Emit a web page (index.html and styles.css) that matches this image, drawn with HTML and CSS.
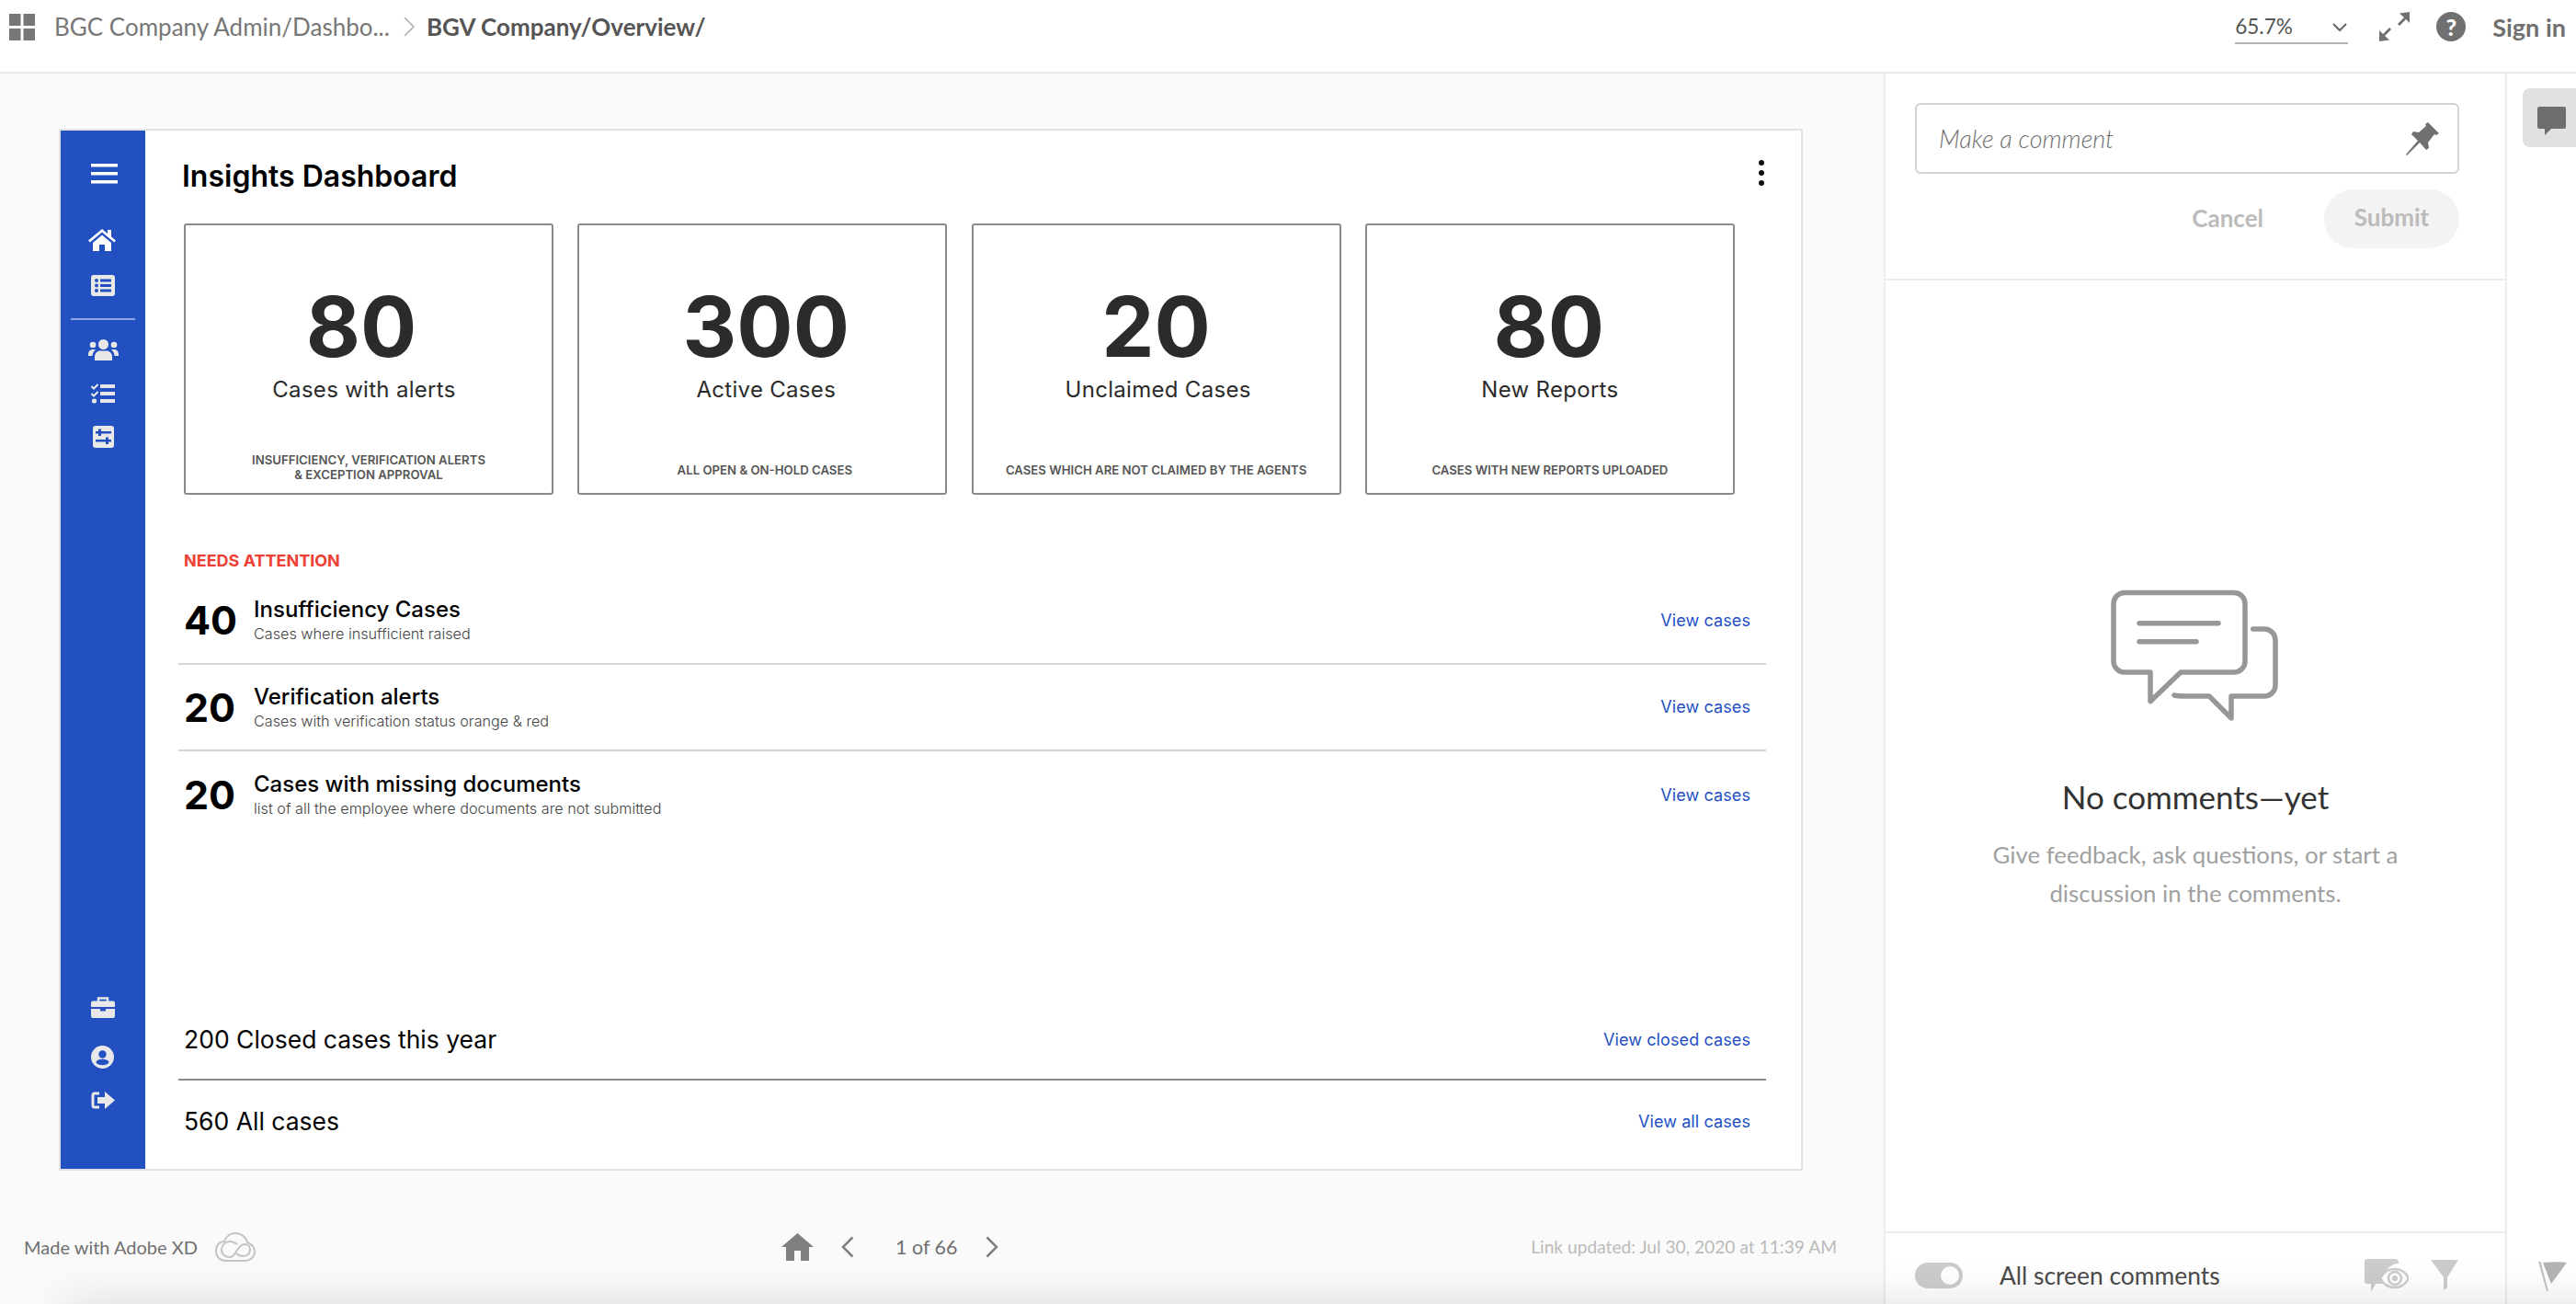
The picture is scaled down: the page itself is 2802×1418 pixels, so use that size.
FILE: index.html
```html
<!DOCTYPE html>
<html>
<head lang="en">
    <meta charset="utf-8">
    <title>BGV Company/Overview/</title>
    <link rel="stylesheet" href="styles.css">
</head>
<body>

<header class="topbar">
    <svg class="grid-icon" viewBox="0 0 28 29"><path d="M0 0h12.500v13H0zM15.500 0H28v13H15.500zM0 16h12.500v13H0zM15.500 16H28v13H15.500z"/></svg>
    <span class="crumb">BGC Company Admin/Dashbo...</span>
    <svg class="crumb-sep" viewBox="0 0 12 22"><path d="M1 1l10 10L1 21"/></svg>
    <span class="crumb crumb-now">BGV Company/Overview/</span>

    <div class="zoom-select">
        <span>65.7%</span>
        <svg viewBox="0 0 16 10"><path d="M1 1l7 7 7-7"/></svg>
    </div>
    <svg class="expand-icon" viewBox="0 0 33 32"><path d="M33 0v12l-4-4-7 7-2-2 7-7-5-4.500zM0 32V20l4 4 7-7 2 2-7 7 5 4.500z"/></svg>
    <div class="help-icon">?</div>
    <a class="sign-in" href="#">Sign in</a>
</header>

<main class="main">
    <section class="stage">
        <div class="frame">
            <nav class="sidebar">
                <svg class="nav-icon nav-menu" viewBox="0 0 29 22"><path d="M0 0h29v3.500H0zM0 9h29v3.500H0zM0 18h29v3.500H0z"/></svg>
                <svg class="nav-icon nav-home" viewBox="0 0 30 24"><path d="M15 0L0 12.500l1.800 2L15 3.600l13.200 10.900 1.800-2-5-4.200V1h-4v4z"/><path d="M5 15L15 6.500 25 15v9h-7v-7h-6v7H5z"/></svg>
                <svg class="nav-icon nav-list" viewBox="0 0 26 23"><rect width="26" height="23" rx="3" fill="#e8e8e8"/><g fill="#2250c1"><circle cx="6" cy="6" r="2"/><circle cx="6" cy="11.500" r="2"/><circle cx="6" cy="17" r="2"/><path d="M10 4.500h12v3H10zM10 10h12v3H10zM10 15.500h12v3H10z"/></g></svg>
                <div class="nav-line"></div>
                <svg class="nav-icon nav-team" viewBox="0 0 33 23"><g fill="#e8e8e8"><circle cx="16.500" cy="5.500" r="5.500"/><circle cx="5" cy="6" r="3.300"/><circle cx="28" cy="6" r="3.300"/><path d="M7 23v-4c0-4 3-6.500 6-6.500h7c3 0 6 2.500 6 6.500v4z"/><path d="M0 17c0-4 2-6 5-6h3c-2 2-3.500 4-3.500 7H0zM33 17c0-4-2-6-5-6h-3c2 2 3.500 4 3.500 7H33z"/></g></svg>
                <svg class="nav-icon nav-check" viewBox="0 0 26 22"><g fill="#e8e8e8"><path d="M10 1h16v4H10zM10 9h16v4H10zM10 17h16v4H10z"/><circle cx="3.500" cy="19" r="2.600"/></g><path d="M0.500 3l2.500 2.500L7.500 1M0.500 11l2.500 2.500L7.500 9" fill="none" stroke="#e8e8e8" stroke-width="2"/></svg>
                <svg class="nav-icon nav-sliders" viewBox="0 0 23 24"><rect width="23" height="24" rx="3" fill="#e8e8e8"/><g fill="#2250c1"><path d="M3 6h17v2.500H3zM3 15h17v2.500H3z"/><path d="M6 3.500h3v7.500H6zM14 12.500h3V20h-3z"/></g></svg>

                <div class="nav-bottom">
                    <svg class="nav-icon nav-case" viewBox="0 0 26 23"><path d="M8 5V1.500h10V5" fill="none" stroke="#e8e8e8" stroke-width="2.500"/><path d="M2 4.500h22a2 2 0 0 1 2 2V11H0V6.500a2 2 0 0 1 2-2zM0 13h10v2.500h6V13h10v8a2 2 0 0 1-2 2H2a2 2 0 0 1-2-2z" fill="#e8e8e8"/></svg>
                    <svg class="nav-icon nav-user" viewBox="0 0 25 25"><circle cx="12.500" cy="12.500" r="12.500" fill="#e8e8e8"/><circle cx="12.500" cy="9.500" r="4.200" fill="#2250c1"/><ellipse cx="12.500" cy="18" rx="7" ry="3.300" fill="#2250c1"/></svg>
                    <svg class="nav-icon nav-exit" viewBox="0 0 26 19"><path d="M9 2H4a2 2 0 0 0-2 2v11a2 2 0 0 0 2 2h5" fill="none" stroke="#e8e8e8" stroke-width="3"/><path d="M7 6h8V0l11 9.500L15 19v-6H7z" fill="#e8e8e8"/></svg>
                </div>
            </nav>

            <div class="content">
                <div class="content-head">
                    <h1>Insights Dashboard</h1>
                    <div class="kebab"><i></i><i></i><i></i></div>
                </div>

                <div class="cards">
                    <div class="card">
                        <div class="card-num">80</div>
                        <div class="card-label">Cases with alerts</div>
                        <div class="card-note">Insufficiency, verification alerts<br>&amp; exception approval</div>
                    </div>
                    <div class="card">
                        <div class="card-num">300</div>
                        <div class="card-label">Active Cases</div>
                        <div class="card-note one-line">All open &amp; on-hold cases</div>
                    </div>
                    <div class="card">
                        <div class="card-num">20</div>
                        <div class="card-label">Unclaimed Cases</div>
                        <div class="card-note one-line">Cases which are not claimed by the agents</div>
                    </div>
                    <div class="card">
                        <div class="card-num">80</div>
                        <div class="card-label">New Reports</div>
                        <div class="card-note one-line">Cases with new reports uploaded</div>
                    </div>
                </div>

                <div class="attention">Needs attention</div>
                <ul class="alerts">
                    <li>
                        <span class="alert-num">40</span>
                        <div class="alert-text">
                            <strong>Insufficiency Cases</strong>
                            <span>Cases where insufficient raised</span>
                        </div>
                        <a href="#">View cases</a>
                    </li>
                    <li>
                        <span class="alert-num">20</span>
                        <div class="alert-text">
                            <strong>Verification alerts</strong>
                            <span>Cases with verification status orange &amp; red</span>
                        </div>
                        <a href="#">View cases</a>
                    </li>
                    <li>
                        <span class="alert-num">20</span>
                        <div class="alert-text">
                            <strong>Cases with missing documents</strong>
                            <span>list of all the employee where documents are not submitted</span>
                        </div>
                        <a href="#">View cases</a>
                    </li>
                </ul>

                <div class="totals">
                    <div class="total-row">
                        <span>200 Closed cases this year</span>
                        <a href="#">View closed cases</a>
                    </div>
                    <div class="total-row">
                        <span>560 All cases</span>
                        <a href="#">View all cases</a>
                    </div>
                </div>
            </div>
        </div>

        <footer class="stage-foot">
            <div class="foot-left">
                <span>Made with Adobe XD</span>
                <svg class="cc-icon" viewBox="0 0 44 32"><path d="M11 31C5 31 1 26 1 20 1 14 5 10 10 10 12 4 17 1 22 1c7 0 12 5 13 10 5 2 8 6 8 10 0 6-5 10-10 10z"/><path d="M24 13c-3-2-5-3-8-3-5 0-9 4-9 9s4 8 9 8c7 0 8-14 16-14 4 0 6 3 6 6s-2 7-7 7c-3 0-6-1-8-3"/></svg>
            </div>
            <div class="foot-pager">
                <svg class="pager-home" viewBox="0 0 35 30"><path d="M17.500 0L0 15h5v15h9V19h7v11h9V15h5z"/></svg>
                <svg class="pager-arrow" viewBox="0 0 14 24"><path d="M12.500 1.500L2 12l10.500 10.500"/></svg>
                <span class="pager-text">1 of 66</span>
                <svg class="pager-arrow" viewBox="0 0 14 24"><path d="M1.500 1.500L12 12 1.500 22.500"/></svg>
            </div>
            <div class="foot-right">Link updated: Jul 30, 2020 at 11:39 AM</div>
        </footer>
    </section>

    <aside class="panel">
        <div class="comment-form">
            <div class="comment-input">
                <span>Make a comment</span>
                <svg class="pin-icon" viewBox="0 0 36 36"><path d="M24 0l12 12-3 2-2-1-7 9 1 6-3 2-7-8-14 14-1-1 13-15-7-7 2-3 6 1 8-7-1-2z"/></svg>
            </div>
            <div class="comment-actions">
                <span class="btn-cancel">Cancel</span>
                <span class="btn-submit">Submit</span>
            </div>
        </div>

        <div class="empty">
            <svg class="empty-icon" viewBox="86 15 200 155"><path d="M128 57.700h86M128 77.700h62"/><path d="M111 24.500h120a12 12 0 0 1 12 12V99a12 12 0 0 1-12 12h-58l-33 31.700V111h-28a12 12 0 0 1-12-12V36.500a12 12 0 0 1 12-12z"/><path d="M251.700 64H264a12 12 0 0 1 12 12v49a12 12 0 0 1-12 12h-36v24l-24-24h-26c-4 0-8 0-12-1"/></svg>
            <h2>No comments—yet</h2>
            <p>Give feedback, ask questions, or start a<br>discussion in the comments.</p>
        </div>

        <div class="panel-foot">
            <div class="toggle"></div>
            <span class="toggle-label">All screen comments</span>
            <svg class="eye-icon" viewBox="0 0 48 36"><path d="M3 0h30c3 0 4 2 4 5-8 0-15 7-16 15l-1 7h-8l-5 9v-9H3c-2 0-3-1-3-3V3c0-2 1-3 3-3z" fill="#ccc"/><path d="M17 21c3-6 9-10 16-10s12 4 15 10c-3 6-8 10-15 10s-13-4-16-10z" fill="#fff" stroke="#ccc" stroke-width="2.500"/><circle cx="33" cy="21" r="7" fill="none" stroke="#ccc" stroke-width="2.500"/><circle cx="33" cy="21" r="3" fill="#ccc"/></svg>
            <svg class="funnel-icon" viewBox="0 0 30 33"><path d="M0 0h30L18 19v11l-4 3V19z"/></svg>
        </div>
    </aside>

    <div class="rail">
        <div class="rail-tab">
            <svg viewBox="0 0 31 31"><path d="M2 0h27a2 2 0 0 1 2 2v20a2 2 0 0 1-2 2H15l-7 7v-7H2a2 2 0 0 1-2-2V2a2 2 0 0 1 2-2z"/></svg>
        </div>
        <svg class="flag-icon" viewBox="0 0 31 32"><path d="M0 0l2.500-.5L11 32l-2 0z" fill="#c4c4c4"/><path d="M3 0h28L15 2 19 1z" fill="#c4c4c4"/><path d="M5 1h26L14 24z" fill="#b4b4b4"/></svg>
    </div>
</main>

</body>
</html>
```

FILE: styles.css
```css
* { box-sizing: border-box; }

html, body {
    height: 100%;
    margin: 0;
}

body {
    display: flex;
    flex-direction: column;
    overflow: hidden;
    background: #fff;
    font-family: Lato, sans-serif;
    color: #4b4b4b;
}

/* soft shadow along the bottom of the window */
body:after {
    content: "";
    position: fixed;
    left: 70px;
    right: -60px;
    bottom: -40px;
    height: 40px;
    box-shadow: 0 0 50px rgba(0, 0, 0, 0.14);
    pointer-events: none;
}

a { text-decoration: none; }

/* top bar */

.topbar {
    flex: 0 0 80px;
    display: flex;
    align-items: center;
    padding: 0 11px 20px 10px;
    border-bottom: 2px solid #e9e9e9;
}

.grid-icon { width: 28px; height: 29px; fill: #777; margin-right: 21px; }

.crumb { font-size: 26px; color: #777; width: 380px; white-space: nowrap; }

.crumb-sep {
    width: 12px;
    height: 22px;
    margin-right: 13px;
    fill: none;
    stroke: #aaa;
    stroke-width: 1.500;
}

.crumb-now { font-weight: 700; color: #555; width: auto; }

.zoom-select {
    margin-left: auto;
    width: 123px;
    height: 38px;
    display: flex;
    justify-content: space-between;
    align-items: center;
    padding-right: 1px;
    border-bottom: 2px solid #b5b5b5;
    font-size: 22.500px;
    color: #555;
}

.zoom-select svg { width: 16px; height: 10px; margin-top: 4px; fill: none; stroke: #666; stroke-width: 2; }

.expand-icon { width: 33px; height: 32px; margin-left: 34px; fill: #707070; }

.help-icon {
    width: 32px;
    height: 32px;
    margin-left: 29px;
    border-radius: 50%;
    background: #707070;
    color: #fff;
    font-size: 25px;
    font-weight: 900;
    line-height: 32px;
    text-align: center;
}

.sign-in { margin-left: 29px; font-size: 27px; font-weight: 700; color: #707070; }

.main {
    flex: 1;
    display: flex;
    min-height: 0;
}

/* artboard */

.stage {
    flex: 0 0 2049px;
    display: flex;
    flex-direction: column;
    background: #fafafa;
}

.frame {
    width: 1897px;
    height: 1133px;
    margin: 60px 0 0 64px;
    display: flex;
    border: 2px solid #e2e2e2;
    background: #fff;
}

.sidebar {
    flex: 0 0 92px;
    display: flex;
    flex-direction: column;
    align-items: center;
    padding: 36px 0 65px;
    background: #2250c1;
}

.nav-icon { display: block; fill: #fff; }
.nav-menu { width: 29px; height: 22px; margin-left: 3px; }
.nav-home { width: 30px; height: 24px; margin: 49px 2px 0 0; }
.nav-list { width: 26px; height: 23px; margin-top: 26px; }
.nav-line { width: 70px; height: 2px; margin-top: 24px; background: #8ea7e0; }
.nav-team { width: 33px; height: 23px; margin-top: 21px; }
.nav-check { width: 26px; height: 22px; margin-top: 25px; }
.nav-sliders { width: 23px; height: 24px; margin-top: 24px; }
.nav-bottom { margin-top: auto; }
.nav-case { width: 26px; height: 23px; }
.nav-user { width: 25px; height: 25px; margin-top: 30px; }
.nav-exit { width: 26px; height: 19px; margin-top: 25px; }

.content {
    flex: 1;
    display: flex;
    flex-direction: column;
    font-family: Inter, sans-serif;
    color: #000;
}

.content-head {
    height: 98px;
    margin: 0 40px 3px 40px;
    display: flex;
    align-items: center;
    justify-content: space-between;
}

h1 { margin: 0; font-size: 32px; font-weight: 600; }

.kebab { display: flex; flex-direction: column; gap: 5px; margin-top: -6px; }
.kebab i { width: 6px; height: 6px; border-radius: 50%; background: #111; }

.cards {
    display: flex;
    gap: 26.300px;
    margin-left: 42px;
}

.card {
    width: 402px;
    height: 295px;
    padding-top: 60px;
    border: 2px solid #8a8a8a;
    border-radius: 3px;
    text-align: center;
    color: #2b2b2b;
}

.card-num {
    font-size: 91px;
    font-weight: 700;
    line-height: 100px;
}

.card-label {
    font-size: 24px;
    line-height: 30px;
    letter-spacing: 0.300px;
    margin-top: 4px;
}

/* the numbers and labels are not quite centred in the original */
.card:nth-child(1) .card-num { margin-left: -16px; }
.card:nth-child(1) .card-label { margin-left: -10px; }
.card:nth-child(2) .card-num { margin-left: 8px; }
.card:nth-child(2) .card-label { margin-left: 8px; }
.card:nth-child(2) .card-note { margin-left: 5px; }
.card:nth-child(3) .card-label { margin-left: 4px; }
.card:nth-child(4) .card-num { margin-left: -2px; }

.card-note {
    height: 32px;
    margin-top: 53px;
    font-size: 13.200px;
    font-weight: 600;
    line-height: 16px;
    text-transform: uppercase;
    color: #555;
}

.one-line { padding-top: 11px; }

.attention {
    margin: 61px 0 7px 42px;
    font-size: 18px;
    font-weight: 700;
    line-height: 22px;
    text-transform: uppercase;
    color: #ee4035;
}

.alerts {
    list-style: none;
    margin: 0 0 0 36px;
    padding: 0;
    width: 1727px;
}

.alerts li {
    height: 94.500px;
    display: flex;
    align-items: center;
    padding: 0 17px 0 6px;
    border-bottom: 2px solid #d4d4d4;
}

.alerts li:last-child { border-bottom: 0; }

.alert-num {
    flex: 0 0 76px;
    font-size: 43px;
    font-weight: 700;
}

.alert-text { flex: 1; display: flex; flex-direction: column; }

.alert-text strong { font-size: 24px; font-weight: 500; line-height: 30px; }

.alert-text span { font-size: 16.200px; font-weight: 300; line-height: 22px; color: #444; }

.content a { font-size: 18px; color: #2250c4; letter-spacing: 0.100px; }

.totals {
    margin: auto 0 8px 36px;
    width: 1727px;
}

.total-row {
    height: 88px;
    display: flex;
    align-items: center;
    justify-content: space-between;
    padding: 0 17px 0 6px;
    font-size: 26.500px;
}

.total-row:first-child { border-bottom: 2px solid #8a8a8a; }

/* footer under the artboard */

.stage-foot {
    flex: 1;
    display: flex;
    align-items: center;
    padding: 20px 51px 0 26px;
    font-size: 20px;
    color: #707070;
}

.foot-left { width: 824px; display: flex; align-items: center; }

.cc-icon { width: 44px; height: 32px; margin-left: 19px; fill: none; stroke: #c4c4c4; stroke-width: 2; }

.foot-pager { display: flex; align-items: center; font-size: 21.500px; }

.pager-home { width: 35px; height: 30px; fill: #808080; margin-right: 30px; }

.pager-arrow { width: 14px; height: 24px; fill: none; stroke: #808080; stroke-width: 2.500; }

.pager-text { width: 143px; padding-left: 45px; white-space: nowrap; }

.foot-right { margin-left: auto; font-size: 19.200px; color: #bbb; }

/* comments panel */

.panel {
    flex: 0 0 676px;
    display: flex;
    flex-direction: column;
    border-left: 2px solid #ececec;
}

.comment-form {
    padding: 32px 50px 33px 32px;
    border-bottom: 2px solid #ececec;
}

.comment-input {
    height: 77px;
    display: flex;
    align-items: center;
    justify-content: space-between;
    padding: 0 20px 0 24px;
    border: 2px solid #d2d2d2;
    border-radius: 6px;
    font-size: 27px;
    font-style: italic;
    font-weight: 300;
    color: #707070;
}

.pin-icon { width: 36px; height: 36px; fill: #707070; }

.comment-actions {
    display: flex;
    align-items: center;
    justify-content: flex-end;
    margin-top: 17px;
    font-size: 26px;
    font-weight: 700;
    color: #bbb;
}

.btn-cancel { margin-bottom: 3px; }

.btn-submit {
    width: 147px;
    height: 64px;
    margin-left: 66px;
    border-radius: 32px;
    background: #f3f3f3;
    line-height: 61px;
    text-align: center;
}

.empty { flex: 1; text-align: center; padding-top: 330px; }

.empty-icon {
    display: block;
    width: 200px;
    height: 155px;
    margin: 0 auto;
    position: relative;
    left: -3px;
    fill: none;
    stroke: #979797;
    stroke-width: 5.500;
    stroke-linecap: round;
    stroke-linejoin: round;
}

.empty h2 {
    margin: 54px 0 20px;
    font-size: 35px;
    font-weight: 400;
    line-height: 44px;
    color: #333;
}

.empty p {
    margin: 0;
    font-size: 25.800px;
    font-weight: 400;
    line-height: 42px;
    color: #a0a0a0;
}

.panel-foot {
    flex: 0 0 79px;
    display: flex;
    align-items: center;
    padding: 14px 51px 0 32px;
    border-top: 2px solid #ececec;
}

.toggle {
    position: relative;
    width: 52px;
    height: 28px;
    border-radius: 14px;
    background: #ccc;
}

.toggle:after {
    content: "";
    position: absolute;
    top: 4px;
    right: 4px;
    width: 20px;
    height: 20px;
    border-radius: 50%;
    background: #fff;
}

.toggle-label { margin-left: 40px; font-size: 26.400px; }

.eye-icon { width: 48px; height: 36px; margin-left: auto; }

.funnel-icon { width: 30px; height: 33px; margin-left: 24px; fill: #ccc; }

/* right rail */

.rail {
    flex: 1;
    display: flex;
    flex-direction: column;
    border-left: 2px solid #ececec;
}

.rail-tab {
    height: 64px;
    margin: 16px 0 0 17px;
    padding: 20px 0 0 16px;
    border-radius: 8px 0 0 8px;
    background: #e1e1e1;
}

.rail-tab svg { display: block; width: 31px; height: 31px; fill: #6e6e6e; }

.flag-icon { width: 31px; height: 32px; margin: auto 0 14px 34px; }
```
